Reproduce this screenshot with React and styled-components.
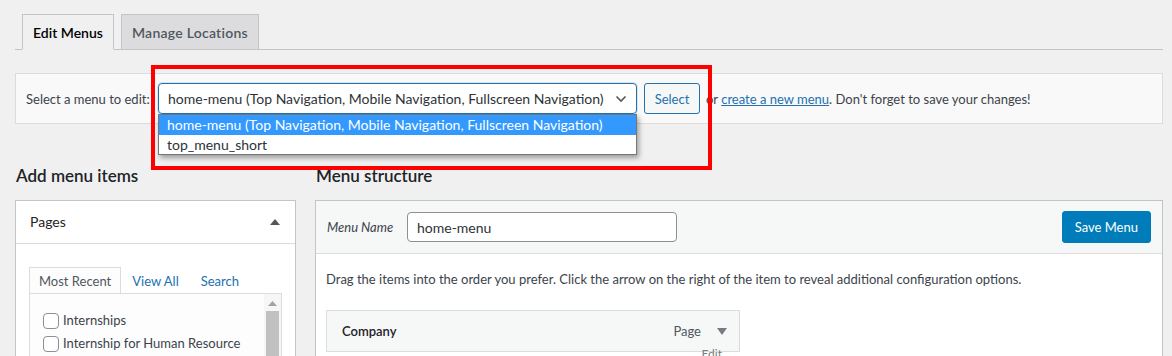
import React from "react";
import styled, { createGlobalStyle } from "styled-components";

const GlobalStyle = createGlobalStyle`
  html, body {
    margin: 0;
    padding: 0;
    background: #f0f0f1;
    font-family: Lato, "Noto Sans", "Liberation Sans", sans-serif;
    color: #3c434a;
    font-size: 13px;
    overflow: hidden;
  }
  * { box-sizing: border-box; }
`;

const App = () => {
  return (
    <>
      <GlobalStyle />
      <StPage>
        <StNavTabs>
          <StTab $active>Edit Menus</StTab>
          <StTab>Manage Locations</StTab>
        </StNavTabs>

        <StManageBar>
          <StLabel>Select a menu to edit:</StLabel>
          <StSelectWrap>
            <StSelect>
              <span>home-menu (Top Navigation, Mobile Navigation, Fullscreen Navigation)</span>
              <svg width="12" height="8" viewBox="0 0 12 8">
                <path d="M1.5 1.5 L6 6 L10.5 1.5" fill="none" stroke="#50575e" strokeWidth="1.6" />
              </svg>
            </StSelect>
            <StOptions>
              <StOption $selected>home-menu (Top Navigation, Mobile Navigation, Fullscreen Navigation)</StOption>
              <StOption>top_menu_short</StOption>
            </StOptions>
          </StSelectWrap>
          <StSecondaryButton type="button">Select</StSecondaryButton>
          <StHint>
            or <a href="#new">create a new menu</a>. Don't forget to save your changes!
          </StHint>
          <StHighlight />
        </StManageBar>

        <StColumns>
          <div>
            <StHeading>Add menu items</StHeading>
            <StSideBox>
              <StSideHeader>
                Pages
                <svg width="10" height="6" viewBox="0 0 10 6">
                  <path d="M0 6 L5 0 L10 6 Z" fill="#50575e" />
                </svg>
              </StSideHeader>
              <StSideBody>
                <StInnerTabs>
                  <StInnerTab $active>Most Recent</StInnerTab>
                  <StInnerTab>View All</StInnerTab>
                  <StInnerTab>Search</StInnerTab>
                </StInnerTabs>
                <StTabPanel>
                  <StChecklist>
                    <StCheckRow>
                      <StCheckbox />
                      Internships
                    </StCheckRow>
                    <StCheckRow>
                      <StCheckbox />
                      Internship for Human Resource
                    </StCheckRow>
                  </StChecklist>
                  <StScrollbar>
                    <svg width="9" height="5" viewBox="0 0 9 5">
                      <path d="M0 5 L4.5 0 L9 5 Z" fill="#a3a3a3" />
                    </svg>
                    <StThumb />
                  </StScrollbar>
                </StTabPanel>
              </StSideBody>
            </StSideBox>
          </div>

          <div>
            <StHeading>Menu structure</StHeading>
            <StMenuBox>
              <StMenuHeader>
                <StMenuNameLabel>Menu Name</StMenuNameLabel>
                <StTextInput>home-menu</StTextInput>
                <StPrimaryButton type="button">Save Menu</StPrimaryButton>
              </StMenuHeader>
              <StMenuBody>
                <StInstructions>
                  Drag the items into the order you prefer. Click the arrow on the right of the item to reveal additional configuration options.
                </StInstructions>
                <StMenuItem>
                  <StItemTitle>Company</StItemTitle>
                  <StItemType>
                    Page
                    <svg width="10" height="7" viewBox="0 0 10 7">
                      <path d="M0 0 L10 0 L5 7 Z" fill="#787c82" />
                    </svg>
                  </StItemType>
                  <StPeek>Edit</StPeek>
                </StMenuItem>
              </StMenuBody>
            </StMenuBox>
          </div>
        </StColumns>
      </StPage>
    </>
  );
};

export default App;

// styled-components
const StPage = styled.div`
  width: 1172px;
  height: 356px;
  padding: 14px 9px 0 15px;
  overflow: hidden;
`;
const StNavTabs = styled.div`
  display: flex;
  gap: 7px;
  padding-left: 7px;
  border-bottom: 1px solid #c3c4c7;
  height: 36px;
`;
const StTab = styled.div`
  padding: 0 10px;
  display: flex;
  align-items: center;
  font-size: 14px;
  font-weight: 600;
  border: 1px solid #c3c4c7;
  border-bottom: ${({ $active }) => ($active ? "1px solid #f0f0f1" : "none")};
  background: ${({ $active }) => ($active ? "#f0f0f1" : "#dcdcde")};
  color: ${({ $active }) => ($active ? "#000" : "#50575e")};
  letter-spacing: ${({ $active }) => ($active ? "0" : "0.25px")};
  margin-bottom: ${({ $active }) => ($active ? "-1px" : "0")};
  height: ${({ $active }) => ($active ? "36px" : "35px")};
`;
const StManageBar = styled.div`
  position: relative;
  margin-top: 23px;
  height: 51px;
  border: 1px solid #dcdcde;
  background: #f9f9f9;
  display: flex;
  align-items: center;
  padding: 0 10px;
`;
const StLabel = styled.span`
  width: 132px;
  white-space: nowrap;
  overflow: hidden;
`;
const StSelectWrap = styled.div`
  position: relative;
  width: 479px;
  z-index: 2;
`;
const StSelect = styled.div`
  height: 31px;
  border: 1px solid #2271b1;
  border-radius: 4px;
  background: #fff;
  display: flex;
  align-items: center;
  justify-content: space-between;
  padding: 0 9px;
  font-size: 14px;
  color: #2c3338;
  box-shadow: 0 0 0 1px rgba(34, 113, 177, 0.15);
  white-space: nowrap;
`;
const StOptions = styled.div`
  position: absolute;
  top: 31px;
  left: 0;
  width: 479px;
  background: #fff;
  border: 1px solid #767676;
  box-shadow: 2px 3px 5px rgba(0, 0, 0, 0.35);
`;
const StOption = styled.div`
  height: 19.5px;
  line-height: 19px;
  padding: 0 8px;
  font-size: 14px;
  white-space: nowrap;
  background: ${({ $selected }) => ($selected ? "#3399ff" : "#fff")};
  color: ${({ $selected }) => ($selected ? "#fff" : "#2c3338")};
`;
const StSecondaryButton = styled.button`
  margin-left: 7px;
  height: 31px;
  width: 56px;
  padding: 0;
  border: 1px solid #2271b1;
  border-radius: 3px;
  background: #f6f7f7;
  color: #2271b1;
  font-family: inherit;
  font-size: 13px;
`;
const StHint = styled.span`
  margin-left: 6px;
  white-space: nowrap;
  a {
    color: #2271b1;
  }
`;
const StHighlight = styled.div`
  position: absolute;
  left: 135px;
  top: -9px;
  width: 561px;
  height: 105px;
  border: 4px solid #ff0000;
  z-index: 3;
  pointer-events: none;
`;
const StColumns = styled.div`
  display: grid;
  grid-template-columns: 281px 1fr;
  column-gap: 19px;
  margin-top: 40px;
`;
const StHeading = styled.h2`
  margin: 0 0 13px 1px;
  font-size: 17px;
  font-weight: 600;
  line-height: 23px;
  color: #1d2327;
`;
const StSideBox = styled.div`
  border: 1px solid #c3c4c7;
  background: #fff;
`;
const StSideHeader = styled.div`
  height: 43px;
  border-bottom: 1px solid #dcdcde;
  display: flex;
  align-items: center;
  justify-content: space-between;
  padding: 0 15px 1px 14px;
  font-size: 14px;
  color: #1d2327;
`;
const StSideBody = styled.div`
  padding: 24px 13px 0 13px;
`;
const StInnerTabs = styled.div`
  display: flex;
  align-items: flex-end;
  height: 25px;
`;
const StInnerTab = styled.div`
  height: 26px;
  padding: 0 9px;
  display: flex;
  align-items: center;
  border: ${({ $active }) => ($active ? "1px solid #dcdcde" : "1px solid transparent")};
  border-bottom: none;
  background: ${({ $active }) => ($active ? "#fdfdfd" : "transparent")};
  color: ${({ $active }) => ($active ? "#50575e" : "#2271b1")};
  margin-right: ${({ $active }) => ($active ? "1px" : "2px")};
  position: relative;
  z-index: 1;
`;
const StTabPanel = styled.div`
  display: flex;
  border: 1px solid #dcdcde;
  background: #fdfdfd;
  height: 80px;
`;
const StChecklist = styled.div`
  flex: 1;
  padding: 18px 0 0 13px;
  display: flex;
  flex-direction: column;
  gap: 6px;
`;
const StCheckRow = styled.label`
  display: flex;
  align-items: center;
  gap: 4px;
  color: #3c434a;
  line-height: 17px;
  white-space: nowrap;
`;
const StCheckbox = styled.span`
  width: 16px;
  height: 16px;
  border: 1px solid #8c8f94;
  border-radius: 4px;
  background: #fff;
`;
const StScrollbar = styled.div`
  width: 17px;
  display: flex;
  flex-direction: column;
  align-items: center;
  padding-top: 7px;
  gap: 5px;
  background: #f6f6f6;
`;
const StThumb = styled.div`
  width: 13px;
  flex: 1;
  background: #c1c1c1;
`;
const StMenuBox = styled.div`
  border: 1px solid #c3c4c7;
  background: #fff;
  height: 200px;
`;
const StMenuHeader = styled.div`
  height: 53px;
  background: #f6f7f7;
  border-bottom: 1px solid #dcdcde;
  display: flex;
  align-items: center;
  padding: 0 11px 0 11px;
`;
const StMenuNameLabel = styled.span`
  font-style: italic;
  width: 80px;
  color: #3c434a;
`;
const StTextInput = styled.div`
  width: 270px;
  height: 30px;
  border: 1px solid #8c8f94;
  border-radius: 4px;
  background: #fff;
  display: flex;
  align-items: center;
  padding: 0 9px;
  font-size: 14px;
  color: #2c3338;
`;
const StPrimaryButton = styled.button`
  margin-left: auto;
  height: 32px;
  padding: 0 12px;
  border: 1px solid #007cba;
  border-radius: 3px;
  background: #007cba;
  color: #fff;
  font-family: inherit;
  font-size: 13px;
`;
const StMenuBody = styled.div`
  padding: 16px 10px 0 10px;
`;
const StInstructions = styled.p`
  margin: 0;
  line-height: 18px;
`;
const StMenuItem = styled.div`
  position: relative;
  margin-top: 22px;
  width: 414px;
  height: 42px;
  border: 1px solid #dcdcde;
  background: #f6f7f7;
  display: flex;
  align-items: center;
  justify-content: space-between;
  padding: 0 15px;
`;
const StItemTitle = styled.span`
  font-weight: 600;
  color: #1d2327;
`;
const StItemType = styled.span`
  display: flex;
  align-items: center;
  gap: 16px;
  color: #50575e;
  margin-right: -3px;
`;
const StPeek = styled.span`
  position: absolute;
  right: 17px;
  top: 35px;
  font-size: 12px;
  color: #787c82;
`;
